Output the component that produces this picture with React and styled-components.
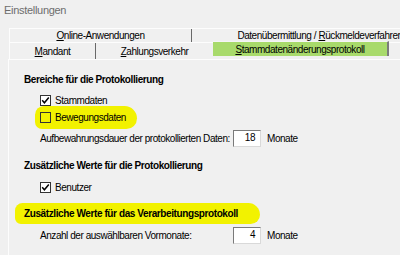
import React from "react";
import styled, { createGlobalStyle } from "styled-components";

const Global = createGlobalStyle`
  html, body {
    margin: 0;
    background: #f0f0f0;
    font-family: "Liberation Sans", Arial, sans-serif;
    font-size: 10px;
    letter-spacing: -0.45px;
    color: #000;
  }
`;

const Window = styled.div`
  width: 400px;
  height: 255px;
  overflow: hidden;
  background: #f0f0f0;
  display: flex;
  flex-direction: column;
`;

const Title = styled.div`
  height: 28px;
  padding: 4px 0 0 4px;
  box-sizing: border-box;
  color: #6d6d6d;
  font-size: 11px;
  letter-spacing: -0.3px;
`;

const TabStrip = styled.div`
  display: flex;
  flex-direction: column;
  padding-left: 9px;
`;

const TabRow = styled.div`
  display: flex;
  height: ${(p) => p.h}px;
  border-top: 1px solid #fdfdfd;
`;

const Tab = styled.div`
  width: ${(p) => p.w}px;
  flex-shrink: 0;
  box-sizing: border-box;
  display: flex;
  justify-content: center;
  align-items: center;
  white-space: nowrap;
  border-left: ${(p) => (p.first ? "1px solid #fdfdfd" : "none")};
  border-right: ${(p) => (p.edge ? "1px solid #696969" : "none")};
  u {
    text-decoration: underline;
    text-underline-offset: 1px;
  }
`;

const ActiveTab = styled(Tab)`
  background: #a8da6b;
  border-right: 2px solid #7c7c7c;
  border-top: 1px solid #f5f5f5;
  margin-top: -2px;
  height: 15px;
`;

const Panel = styled.div`
  flex: 1;
  margin-left: 8px;
  border-left: 1px solid #fdfdfd;
  border-top: 1px solid #fdfdfd;
  padding: 11px 0 0 15px;
  display: flex;
  flex-direction: column;
`;

const Heading = styled.div`
  position: relative;
  z-index: 0;
  height: 16px;
  margin-top: ${(p) => p.mt || 0}px;
  display: flex;
  align-items: center;
  width: max-content;
  font-weight: bold;
  letter-spacing: -0.4px;
  ${(p) =>
    p.mark &&
    `&::before {
      content: "";
      position: absolute;
      left: -9px; right: -22px; top: -2px; bottom: -3px;
      background: #f2f200;
      border-radius: 9px 14px 11px 7px;
      z-index: -1;
    }`}
`;

const Group = styled.div`
  padding-left: 16px;
  margin-top: ${(p) => p.mt || 0}px;
  display: flex;
  flex-direction: column;
`;

const CheckRow = styled.label`
  position: relative;
  z-index: 0;
  display: flex;
  align-items: center;
  gap: 4px;
  height: 17px;
  width: max-content;
  ${(p) =>
    p.mark &&
    `&::before {
      content: "";
      position: absolute;
      left: -5px; right: -11px; top: -3px; bottom: -3px;
      background: #f2f200;
      border-radius: 10px 14px 12px 8px;
      z-index: -1;
    }`}
`;

const Box = styled.span`
  width: 11px;
  height: 11px;
  box-sizing: border-box;
  border: 1px solid #333;
  background: ${(p) => (p.clear ? "transparent" : "#fff")};
  display: inline-flex;
  align-items: center;
  justify-content: center;
  svg {
    display: block;
  }
`;

const FieldRow = styled.div`
  display: grid;
  grid-template-columns: 193px 28px auto;
  align-items: center;
  height: 18px;
  margin-top: ${(p) => p.mt || 0}px;
`;

const Field = styled.span`
  height: 17px;
  box-sizing: border-box;
  border: 1px solid #7a7a7a;
  border-right-color: #d9d9d9;
  border-bottom-color: #d9d9d9;
  background: #fff;
  text-align: right;
  padding-right: 5px;
  line-height: 14px;
`;

const Unit = styled.span`
  margin-left: 6px;
`;

const Check = ({ checked, clear }) => (
  <Box clear={clear}>
    {checked && (
      <svg width="9" height="9" viewBox="0 0 9 9">
        <path d="M1.2 4.3 L3.4 6.8 L7.8 1.6" fill="none" stroke="#000" strokeWidth="1.5" />
      </svg>
    )}
  </Box>
);

export default function App() {
  return (
    <Window>
      <Global />
      <Title>Einstellungen</Title>
      <TabStrip>
        <TabRow h={13}>
          <Tab w={183} first edge>
            <span>
              <u>O</u>nline-Anwendungen
            </span>
          </Tab>
          <Tab w={256}>
            <span>
              Datenübermittlung / <u>R</u>ückmeldeverfahren
            </span>
          </Tab>
        </TabRow>
        <TabRow h={16}>
          <Tab w={87} first edge>
            <span>
              <u>M</u>andant
            </span>
          </Tab>
          <Tab w={117}>
            <span>
              <u>Z</u>ahlungsverkehr
            </span>
          </Tab>
          <ActiveTab w={176}>
            <span>
              <u>S</u>tammdatenänderungsprotokoll
            </span>
          </ActiveTab>
        </TabRow>
      </TabStrip>
      <Panel>
        <Heading>Bereiche für die Protokollierung</Heading>
        <Group mt={5}>
          <CheckRow>
            <Check checked />
            <span>Stammdaten</span>
          </CheckRow>
          <CheckRow mark>
            <Check clear />
            <span>Bewegungsdaten</span>
          </CheckRow>
          <FieldRow mt={3}>
            <span>Aufbewahrungsdauer der protokollierten Daten:</span>
            <Field>18</Field>
            <Unit>Monate</Unit>
          </FieldRow>
        </Group>
        <Heading mt={10}>Zusätzliche Werte für die Protokollierung</Heading>
        <Group mt={6}>
          <CheckRow>
            <Check checked />
            <span>Benutzer</span>
          </CheckRow>
        </Group>
        <Heading mark mt={9}>
          Zusätzliche Werte für das Verarbeitungsprotokoll
        </Heading>
        <Group mt={5}>
          <FieldRow>
            <span>Anzahl der auswählbaren Vormonate:</span>
            <Field>4</Field>
            <Unit>Monate</Unit>
          </FieldRow>
        </Group>
      </Panel>
    </Window>
  );
}
